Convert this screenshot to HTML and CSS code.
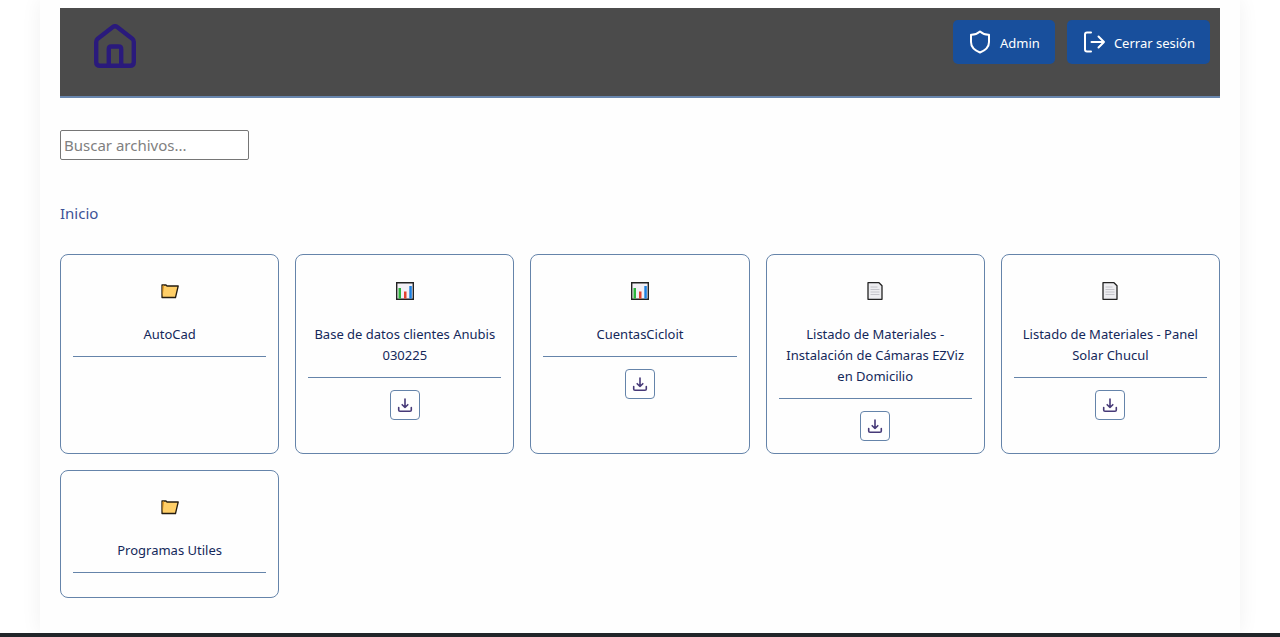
FILE: index.html
```html
<!DOCTYPE html>
<html lang="es">
<head>
<meta charset="utf-8">
<meta name="viewport" content="width=device-width, initial-scale=1">
<title>Archivos</title>
<link rel="stylesheet" href="styles.css">
</head>
<body>
<svg class="sprite" aria-hidden="true">
  <symbol id="folder" viewBox="0 0 18 18">
    <path d="M1 15.500V3h4l1 1h11.200l-2.700 11.500z" fill="#ffcf68" stroke="#241c10" stroke-width="1.300" stroke-linejoin="round"/>
    <path d="M1.600 14.500L3 5V3.600H1.600z" fill="#e69a20"/>
  </symbol>
  <symbol id="chart" viewBox="0 0 18 18">
    <path d="M.7.7h16.600v16.600H.7z" fill="#f3f0f6" stroke="#222" stroke-width="1.400"/>
    <path d="M2.500 6H5v10.600H2.500z" fill="#2cb53c"/>
    <path d="M8 9.500h2.500v7.100H8z" fill="#e2432f"/>
    <path d="M13.300 4h2.500v12.600h-2.500z" fill="#1b7fe0"/>
  </symbol>
  <symbol id="page" viewBox="0 0 18 18">
    <path d="M2 .7h11L16 3.700v13.600H2z" fill="#ededf0" stroke="#222" stroke-width="1.300" stroke-linejoin="round"/>
    <path d="M4.500 5h7M4.500 7.500h9M4.500 10h9M4.500 12.500h9" stroke="#c4c4ca" stroke-width="1"/>
  </symbol>
  <symbol id="download" viewBox="0 0 16 16">
    <path d="M8 2v8.500M5.200 7.700L8 10.500l2.800-2.800M1.700 10.500v2.500q0 1.300 1.300 1.300h10q1.300 0 1.300-1.300v-2.500" fill="none" stroke="#473a78" stroke-width="1.600" stroke-linecap="round" stroke-linejoin="round"/>
  </symbol>
</svg>
<div class="container">
  <header class="header">
    <a class="home" href="#" aria-label="Inicio">
      <svg viewBox="0 0 42 44" width="42" height="44" fill="none" stroke="#2a1a7c" stroke-width="4.400" stroke-linejoin="round"><path d="M2.200 18q0-2 1.500-3.300L18.500 3.200Q21 1.200 23.500 3.200l14.800 11.500q1.500 1.300 1.500 3.300v20q0 3.800-4 3.800H6.200q-4 0-4-3.800z"/><path d="M14.800 41.500V25q0-2.500 2.500-2.500h7.400q2.500 0 2.500 2.500v16.500"/></svg>
    </a>
    <nav class="actions">
      <button class="btn" type="button"><svg viewBox="0 0 24 24" width="24" height="24"><path d="M12 1.500Q16 5 21 4.800V12c0 5-4 8.500-9 10.500C7 20.500 3 17 3 12V4.800Q8 5 12 1.500z"/></svg><span>Admin</span></button>
      <button class="btn" type="button"><svg viewBox="0 0 24 24" width="24" height="24"><path d="M9 2.500H5Q3 2.500 3 4.500v15q0 2 2 2h4M9.500 12H22M16.500 6.500L22 12l-5.500 5.500"/></svg><span>Cerrar sesión</span></button>
    </nav>
  </header>
  <input class="search" type="search" placeholder="Buscar archivos..." aria-label="Buscar archivos">
  <nav class="crumbs"><a href="#">Inicio</a></nav>
  <main class="grid">
    <article class="card"><svg class="icon"><use href="#folder"/></svg><h2 class="name">AutoCad</h2><div></div></article>
    <article class="card"><svg class="icon"><use href="#chart"/></svg><h2 class="name">Base de datos clientes Anubis 030225</h2><button class="download" type="button" aria-label="Descargar"><svg><use href="#download"/></svg></button></article>
    <article class="card"><svg class="icon"><use href="#chart"/></svg><h2 class="name">CuentasCicloit</h2><button class="download" type="button" aria-label="Descargar"><svg><use href="#download"/></svg></button></article>
    <article class="card"><svg class="icon"><use href="#page"/></svg><h2 class="name">Listado de Materiales - Instalación de Cámaras EZViz en Domicilio</h2><button class="download" type="button" aria-label="Descargar"><svg><use href="#download"/></svg></button></article>
    <article class="card"><svg class="icon"><use href="#page"/></svg><h2 class="name">Listado de Materiales - Panel Solar Chucul</h2><button class="download" type="button" aria-label="Descargar"><svg><use href="#download"/></svg></button></article>
    <article class="card"><svg class="icon"><use href="#folder"/></svg><h2 class="name">Programas Utiles</h2><div></div></article>
  </main>
</div>
<footer class="footer"></footer>
</body>
</html>
```
FILE: styles.css
```css
* { box-sizing: border-box; }
body {
  margin: 0;
  min-height: 100vh;
  display: flex;
  flex-direction: column;
  background: #fff;
  color: #14285a;
  font-family: "Segoe UI", "Noto Sans", sans-serif;
}
.sprite { display: none; }
.container {
  flex: 1;
  width: 100%;
  max-width: 1200px;
  margin: 0 auto;
  padding: 8px 20px 32px;
  background: #fefefe;
  box-shadow: 0 0 20px rgba(0, 0, 0, 0.06);
}
.header {
  display: flex;
  justify-content: space-between;
  align-items: flex-start;
  height: 90px;
  padding: 12px 10px 0 34px;
  background: #4b4b4b;
  border-bottom: 2px solid #6886ae;
}
.home { display: block; padding-top: 4px; }
.home svg { display: block; }
.actions { display: flex; gap: 12px; }
.btn {
  display: flex;
  align-items: center;
  gap: 8px;
  height: 44px;
  padding: 0 15px;
  border: 0;
  border-radius: 5px;
  background: #184f9c;
  color: #fff;
  font: 13px/20px "Segoe UI", "Noto Sans", sans-serif;
}
.btn span { padding-top: 2px; }
.btn svg {
  fill: none;
  stroke: #fff;
  stroke-width: 2;
  stroke-linecap: round;
  stroke-linejoin: round;
}
.search {
  display: block;
  width: 189px;
  height: 30px;
  margin-top: 32px;
  padding: 0 3px;
  border: 1px solid #767676;
  border-radius: 2px;
  background: #fff;
  font: 15px/20px "Segoe UI", "Noto Sans", sans-serif;
  appearance: none;
}
.search::placeholder { color: #808080; opacity: 1; }
.crumbs { margin: 41px 0 29px; font-size: 15px; line-height: 24px; }
.crumbs a { color: #3c5296; text-decoration: none; }
.grid {
  display: grid;
  grid-template-columns: repeat(auto-fill, minmax(200px, 1fr));
  gap: 16px;
}
.card {
  display: flex;
  flex-direction: column;
  align-items: center;
  gap: 12px;
  padding: 12px;
  border: 1px solid #6584aa;
  border-radius: 8px;
}
.icon { width: 18px; height: 45px; padding-top: 3px; }
.name {
  width: 100%;
  margin: 0;
  padding-bottom: 11px;
  border-bottom: 1px solid #6584aa;
  font-size: 13px;
  font-weight: 400;
  line-height: 21px;
  text-align: center;
}
.download {
  display: grid;
  place-items: center;
  width: 30px;
  height: 30px;
  padding: 0;
  border: 1px solid #6584aa;
  border-radius: 4px;
  background: #fff;
}
.download svg { width: 16px; height: 16px; }
.footer { height: 4px; background: #212529; }
```
